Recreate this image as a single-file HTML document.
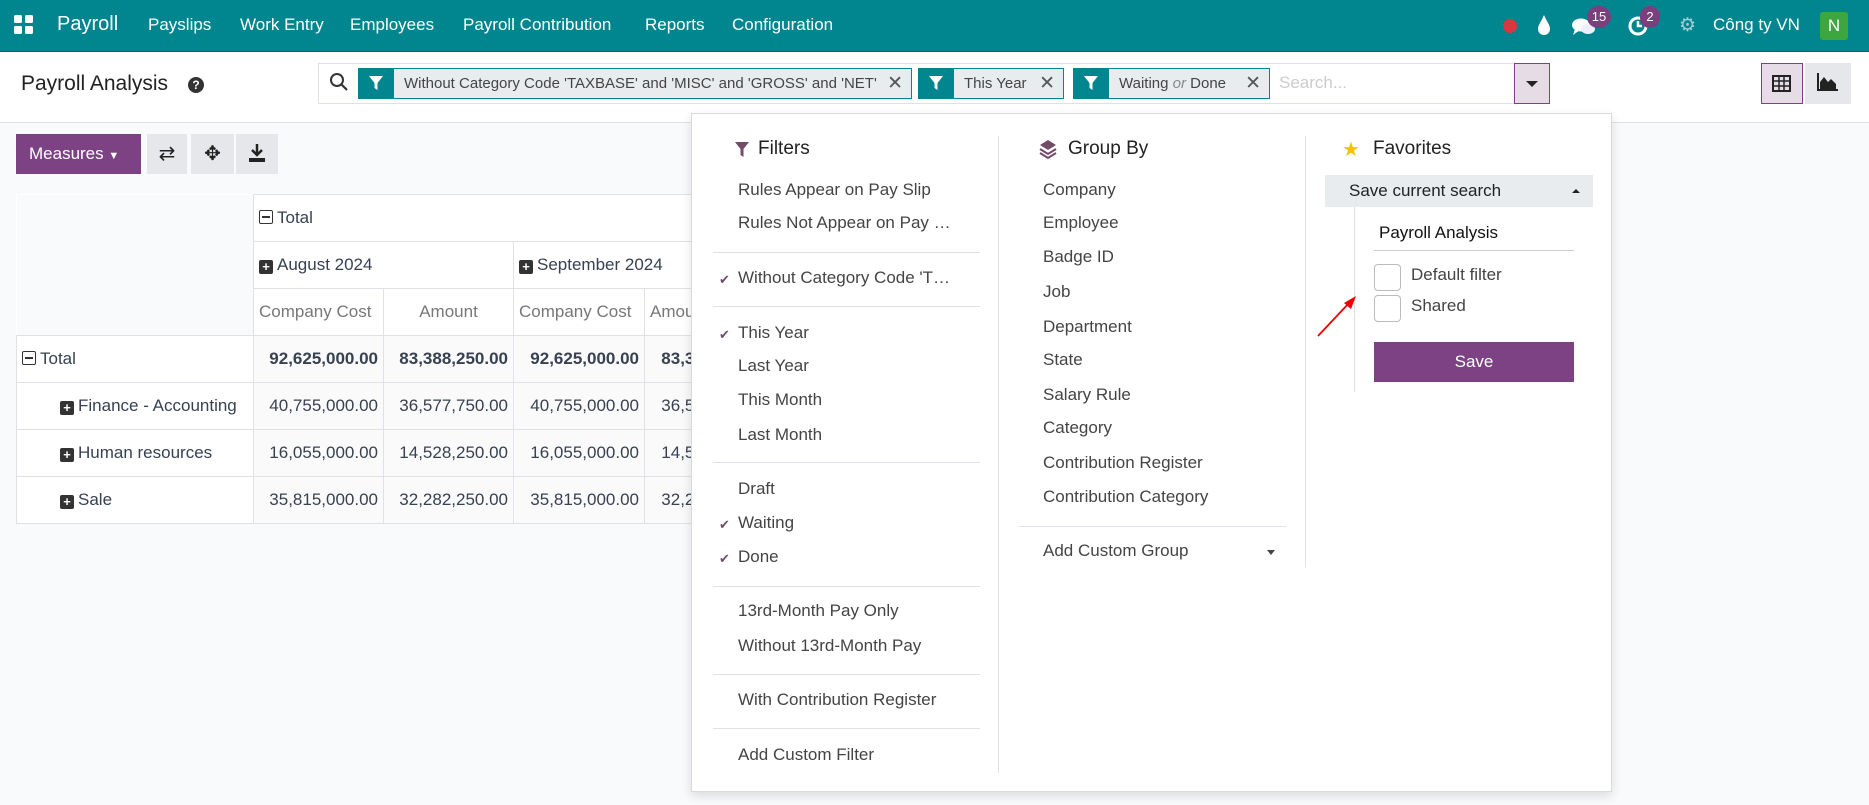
<!DOCTYPE html>
<html><head><meta charset="utf-8"><style>
*{box-sizing:border-box;margin:0;padding:0}
body{width:1869px;height:805px;overflow:hidden;background:#f9fafb;font-family:"Liberation Sans",sans-serif;color:#374151;position:relative;font-size:17px}
.a{position:absolute;white-space:nowrap}
.nav{position:absolute;left:0;top:0;width:1869px;height:52px;background:#01868f;border-bottom:1px solid #01666c;color:#fff}
.nav .a{top:15px;font-size:17px}
.cp{position:absolute;left:0;top:52px;width:1869px;height:71px;background:#fff;border-bottom:1px solid #dee2e6}
.facet{position:absolute;top:68px;height:31px;border:1px solid #01868f;background:#e9ecef;font-size:15px;color:#444}
.facet .ic{position:absolute;left:0;top:0;width:35px;height:29px;background:#01868f}
.facet .t{position:absolute;left:45px;top:6px;white-space:nowrap}
.facet .x{position:absolute;right:8px;top:3px;font-size:19px;color:#555}
table{border-collapse:collapse;position:absolute;left:16px;top:194px;background:#fff;font-size:17px}
td{border:1px solid #dee2e6;height:47px;padding:0 5px;white-space:nowrap}
.num{text-align:right;background:#fafafa}
.dd{position:absolute;left:691px;top:113px;width:921px;height:679px;background:#fff;border:1px solid #d8dadd;box-shadow:0 4px 10px rgba(0,0,0,.12)}
.it{position:absolute;white-space:nowrap;font-size:17px;color:#444}
.sep{position:absolute;height:1px;background:#dee2e6}
.ck{position:absolute;color:#714b67;font-size:13px}
.hd{position:absolute;font-size:19px;color:#222}
.pl{display:inline-block;width:14px;height:14px;background:#333;border-radius:2px;color:#fff;font-size:13px;line-height:13px;text-align:center;font-weight:bold;margin-right:4px;vertical-align:-1px}
.mn{display:inline-block;width:14px;height:14px;border:1.5px solid #333;border-radius:2px;position:relative;margin-right:4px;vertical-align:-1px}
.mn:after{content:"";position:absolute;left:2px;right:2px;top:5px;height:1.5px;background:#333}
</style></head><body>
<div class="nav">
 <svg class="a" style="left:14px;top:15px" width="20" height="20"><rect x="0" y="0" width="8" height="8" rx="1.5" fill="#fff"/><rect x="11" y="0" width="8" height="8" rx="1.5" fill="#fff"/><rect x="0" y="11" width="8" height="8" rx="1.5" fill="#fff"/><rect x="11" y="11" width="8" height="8" rx="1.5" fill="#fff"/></svg>
 <div class="a" style="left:57px;top:13px;font-size:20px">Payroll</div>
 <div class="a" style="left:148px">Payslips</div>
 <div class="a" style="left:240px">Work Entry</div>
 <div class="a" style="left:350px">Employees</div>
 <div class="a" style="left:463px">Payroll Contribution</div>
 <div class="a" style="left:645px">Reports</div>
 <div class="a" style="left:732px">Configuration</div>
 <div class="a" style="left:1503px;top:19px;width:14px;height:14px;border-radius:50%;background:#d9363e"></div>
 <svg class="a" style="left:1537px;top:14px" width="14" height="22"><path d="M7 1 C4 8 1 11 1 15 a6 6 0 0 0 12 0 C13 11 10 8 7 1Z" fill="#fff"/></svg>
 <svg class="a" style="left:1571px;top:16px" width="26" height="22"><ellipse cx="10" cy="9" rx="9" ry="6.5" fill="#fff"/><path d="M4 13 L2 19 L9 14Z" fill="#fff"/><ellipse cx="17" cy="13" rx="7" ry="5" fill="#eef"/></svg>
 <div class="a" style="left:1587px;top:6px;width:24px;height:22px;border-radius:11px;background:#7c3f7e;font-size:13px;text-align:center;line-height:22px">15</div>
 <svg class="a" style="left:1627px;top:15px" width="22" height="22"><circle cx="11" cy="11" r="8" stroke="#fff" stroke-width="3" fill="none"/><path d="M11 6 V11 H15" stroke="#fff" stroke-width="2.5" fill="none"/></svg>
 <div class="a" style="left:1640px;top:6px;width:20px;height:22px;border-radius:11px;background:#7c3f7e;font-size:13px;text-align:center;line-height:22px">2</div>
 <div class="a" style="left:1679px;top:14px;font-size:19px;color:#9fd0d4">⚙</div>
 <div class="a" style="left:1713px">Công ty VN</div>
 <div class="a" style="left:1820px;top:12px;width:28px;height:28px;background:#3ea63f;border-radius:3px;text-align:center;line-height:28px;font-size:17px">N</div>
</div>
<div class="cp">
 <div class="a" style="left:21px;top:20px;font-size:21px;color:#222">Payroll Analysis</div>
 <div class="a" style="left:188px;top:25px;width:16px;height:16px;border-radius:50%;background:#333;color:#fff;font-size:12px;font-weight:bold;text-align:center;line-height:16px">?</div>
 <div class="a" style="left:318px;top:11px;width:1232px;height:41px;border:1px solid #dee2e6;background:#fff"></div>
 <svg class="a" style="left:329px;top:20px" width="20" height="20"><circle cx="8" cy="8" r="6" stroke="#333" stroke-width="2" fill="none"/><path d="M12.5 12.5 L18 18" stroke="#333" stroke-width="2.2"/></svg>
 <div class="a" style="left:1279px;top:21px;font-size:17px;color:#ccc">Search...</div>
 <div class="a" style="left:1514px;top:11px;width:36px;height:41px;background:#e6dce6;border:1px solid #7c4283"></div>
 <div class="a" style="left:1526px;top:29px;border:6px solid transparent;border-top:6px solid #222;border-bottom:0"></div>
 <div class="a" style="left:1761px;top:11px;width:42px;height:41px;background:#e6dce6;border:1px solid #7c4283"></div>
 <svg class="a" style="left:1772px;top:21px" width="20" height="20"><rect x="1" y="3" width="17" height="15" fill="none" stroke="#222" stroke-width="2"/><path d="M1 8H18M1 13H18M7 3V18M12 3V18" stroke="#222" stroke-width="1.5"/></svg>
 <div class="a" style="left:1805px;top:11px;width:46px;height:41px;background:#e5e7ea"></div>
 <svg class="a" style="left:1817px;top:20px" width="22" height="20"><path d="M1 1V18H21" stroke="#222" stroke-width="2" fill="none"/><path d="M3 17 L3 10 L7 5 L11 10 L14 7 L19 12 L19 17Z" fill="#222"/></svg>
</div>
<div class="facet" style="left:358px;width:554px"><div class="ic"></div><div class="t">Without Category Code 'TAXBASE' and 'MISC' and 'GROSS' and 'NET'</div><div class="x">✕</div></div>
<div class="facet" style="left:918px;width:146px"><div class="ic"></div><div class="t">This Year</div><div class="x">✕</div></div>
<div class="facet" style="left:1073px;width:197px"><div class="ic"></div><div class="t">Waiting <i style="color:#888">or</i> Done</div><div class="x">✕</div></div>
<svg class="a" style="left:368px;top:75px" width="16" height="17"><path d="M1 1H15L9.5 8V15L6.5 13V8Z" fill="#fff"/></svg>
<svg class="a" style="left:928px;top:75px" width="16" height="17"><path d="M1 1H15L9.5 8V15L6.5 13V8Z" fill="#fff"/></svg>
<svg class="a" style="left:1083px;top:75px" width="16" height="17"><path d="M1 1H15L9.5 8V15L6.5 13V8Z" fill="#fff"/></svg>

<div class="a" style="left:16px;top:134px;width:125px;height:40px;background:#7c4283;color:#fff;font-size:17px;padding:10px 0 0 13px">Measures <span style="font-size:11px">▼</span></div>
<div class="a" style="left:147px;top:134px;width:40px;height:40px;background:#e5e7ea;text-align:center;line-height:40px;font-size:20px;color:#222">⇄</div>
<div class="a" style="left:191px;top:134px;width:43px;height:40px;background:#e5e7ea;text-align:center;line-height:40px;font-size:20px;color:#222">✥</div>
<div class="a" style="left:236px;top:134px;width:42px;height:40px;background:#e5e7ea"></div>
<svg class="a" style="left:248px;top:143px" width="18" height="20"><path d="M9 1V11M4 7L9 12L14 7" stroke="#222" stroke-width="2.5" fill="none"/><rect x="1" y="15" width="16" height="4" fill="#222"/></svg>

<table>
<tr><td style="border:0;background:#f9fafb;width:237px"></td><td colspan="5" style="width:460px;background:#fff"><span class="mn"></span>Total</td></tr>
<tr><td style="border:0;background:#f9fafb"></td><td colspan="2" style="background:#fff"><span class="pl">+</span>August 2024</td><td colspan="3" style="background:#fff"><span class="pl">+</span>September 2024</td></tr>
<tr style="color:#777"><td style="border:0;border-bottom:1px solid #dee2e6;background:#f9fafb"></td><td style="width:130px">Company Cost</td><td style="width:130px;text-align:center">Amount</td><td style="width:131px">Company Cost</td><td style="width:131px">Amount</td></tr>
<tr style="font-weight:bold"><td style="font-weight:normal"><span class="mn"></span>Total</td><td class="num">92,625,000.00</td><td class="num">83,388,250.00</td><td class="num">92,625,000.00</td><td class="num">83,388,250.00</td></tr>
<tr><td style="padding-left:43px"><span class="pl">+</span>Finance - Accounting</td><td class="num">40,755,000.00</td><td class="num">36,577,750.00</td><td class="num">40,755,000.00</td><td class="num">36,577,750.00</td></tr>
<tr><td style="padding-left:43px"><span class="pl">+</span>Human resources</td><td class="num">16,055,000.00</td><td class="num">14,528,250.00</td><td class="num">16,055,000.00</td><td class="num">14,528,250.00</td></tr>
<tr><td style="padding-left:43px"><span class="pl">+</span>Sale</td><td class="num">35,815,000.00</td><td class="num">32,282,250.00</td><td class="num">35,815,000.00</td><td class="num">32,282,250.00</td></tr>
</table>

<div class="dd">
 <svg class="a" style="left:42px;top:27px" width="16" height="17"><path d="M1 1H15L9.5 8V16L6.5 14V8Z" fill="#714b67"/></svg>
 <div class="hd" style="left:66px;top:24px">Filters</div>
 <div class="it" style="left:46px;top:66px">Rules Appear on Pay Slip</div>
 <div class="it" style="left:46px;top:99px">Rules Not Appear on Pay …</div>
 <div class="sep" style="left:21px;width:267px;top:138px"></div>
 <div class="ck" style="left:27px;top:158px">✔</div><div class="it" style="left:46px;top:154px">Without Category Code 'T…</div>
 <div class="sep" style="left:21px;width:267px;top:192px"></div>
 <div class="ck" style="left:27px;top:213px">✔</div><div class="it" style="left:46px;top:209px">This Year</div>
 <div class="it" style="left:46px;top:242px">Last Year</div>
 <div class="it" style="left:46px;top:276px">This Month</div>
 <div class="it" style="left:46px;top:311px">Last Month</div>
 <div class="sep" style="left:21px;width:267px;top:348px"></div>
 <div class="it" style="left:46px;top:365px">Draft</div>
 <div class="ck" style="left:27px;top:403px">✔</div><div class="it" style="left:46px;top:399px">Waiting</div>
 <div class="ck" style="left:27px;top:437px">✔</div><div class="it" style="left:46px;top:433px">Done</div>
 <div class="sep" style="left:21px;width:267px;top:472px"></div>
 <div class="it" style="left:46px;top:487px">13rd-Month Pay Only</div>
 <div class="it" style="left:46px;top:522px">Without 13rd-Month Pay</div>
 <div class="sep" style="left:21px;width:267px;top:560px"></div>
 <div class="it" style="left:46px;top:576px">With Contribution Register</div>
 <div class="sep" style="left:21px;width:267px;top:614px"></div>
 <div class="it" style="left:46px;top:631px">Add Custom Filter</div>
 <div class="sep" style="left:306px;width:1px;top:22px;height:637px"></div>

 <svg class="a" style="left:347px;top:25px" width="18" height="22"><path d="M9 1L17 6L9 11L1 6Z" fill="#714b67"/><path d="M1 10L9 15L17 10M1 14L9 19L17 14" stroke="#714b67" stroke-width="2" fill="none"/></svg>
 <div class="hd" style="left:376px;top:24px">Group By</div>
 <div class="it" style="left:351px;top:66px">Company</div>
 <div class="it" style="left:351px;top:99px">Employee</div>
 <div class="it" style="left:351px;top:133px">Badge ID</div>
 <div class="it" style="left:351px;top:168px">Job</div>
 <div class="it" style="left:351px;top:203px">Department</div>
 <div class="it" style="left:351px;top:236px">State</div>
 <div class="it" style="left:351px;top:271px">Salary Rule</div>
 <div class="it" style="left:351px;top:304px">Category</div>
 <div class="it" style="left:351px;top:339px">Contribution Register</div>
 <div class="it" style="left:351px;top:373px">Contribution Category</div>
 <div class="sep" style="left:327px;width:267px;top:412px"></div>
 <div class="it" style="left:351px;top:427px">Add Custom Group</div>
 <div class="a" style="left:575px;top:436px;border:4px solid transparent;border-top:5px solid #444;border-bottom:0"></div>
 <div class="sep" style="left:613px;width:1px;top:22px;height:431px"></div>

 <div class="a" style="left:650px;top:23px;color:#f3c300;font-size:20px">★</div>
 <div class="hd" style="left:681px;top:24px">Favorites</div>
 <div class="a" style="left:633px;top:61px;width:268px;height:32px;background:#e9ecef"></div>
 <div class="it" style="left:657px;top:67px;color:#222">Save current search</div>
 <div class="a" style="left:880px;top:75px;border:4px solid transparent;border-bottom:4px solid #222;border-top:0"></div>
 <div class="sep" style="left:662px;width:1px;top:93px;height:185px"></div>
 <div class="it" style="left:687px;top:109px;color:#111">Payroll Analysis</div>
 <div class="sep" style="left:682px;width:200px;top:136px;background:#ccc"></div>
 <div class="a" style="left:682px;top:150px;width:27px;height:27px;border:1px solid #bbb;border-radius:4px"></div>
 <div class="it" style="left:719px;top:151px">Default filter</div>
 <div class="a" style="left:682px;top:181px;width:27px;height:27px;border:1px solid #bbb;border-radius:4px"></div>
 <div class="it" style="left:719px;top:182px">Shared</div>
 <div class="a" style="left:682px;top:228px;width:200px;height:40px;background:#7c4283;color:#fff;text-align:center;line-height:40px;font-size:17px">Save</div>
 <svg class="a" style="left:624px;top:178px" width="42" height="46"><path d="M2 44 L34 10" stroke="#e00" stroke-width="1.8"/><path d="M40 4 L28 11 L35 17Z" fill="#e00"/></svg>
</div>
</body></html>
